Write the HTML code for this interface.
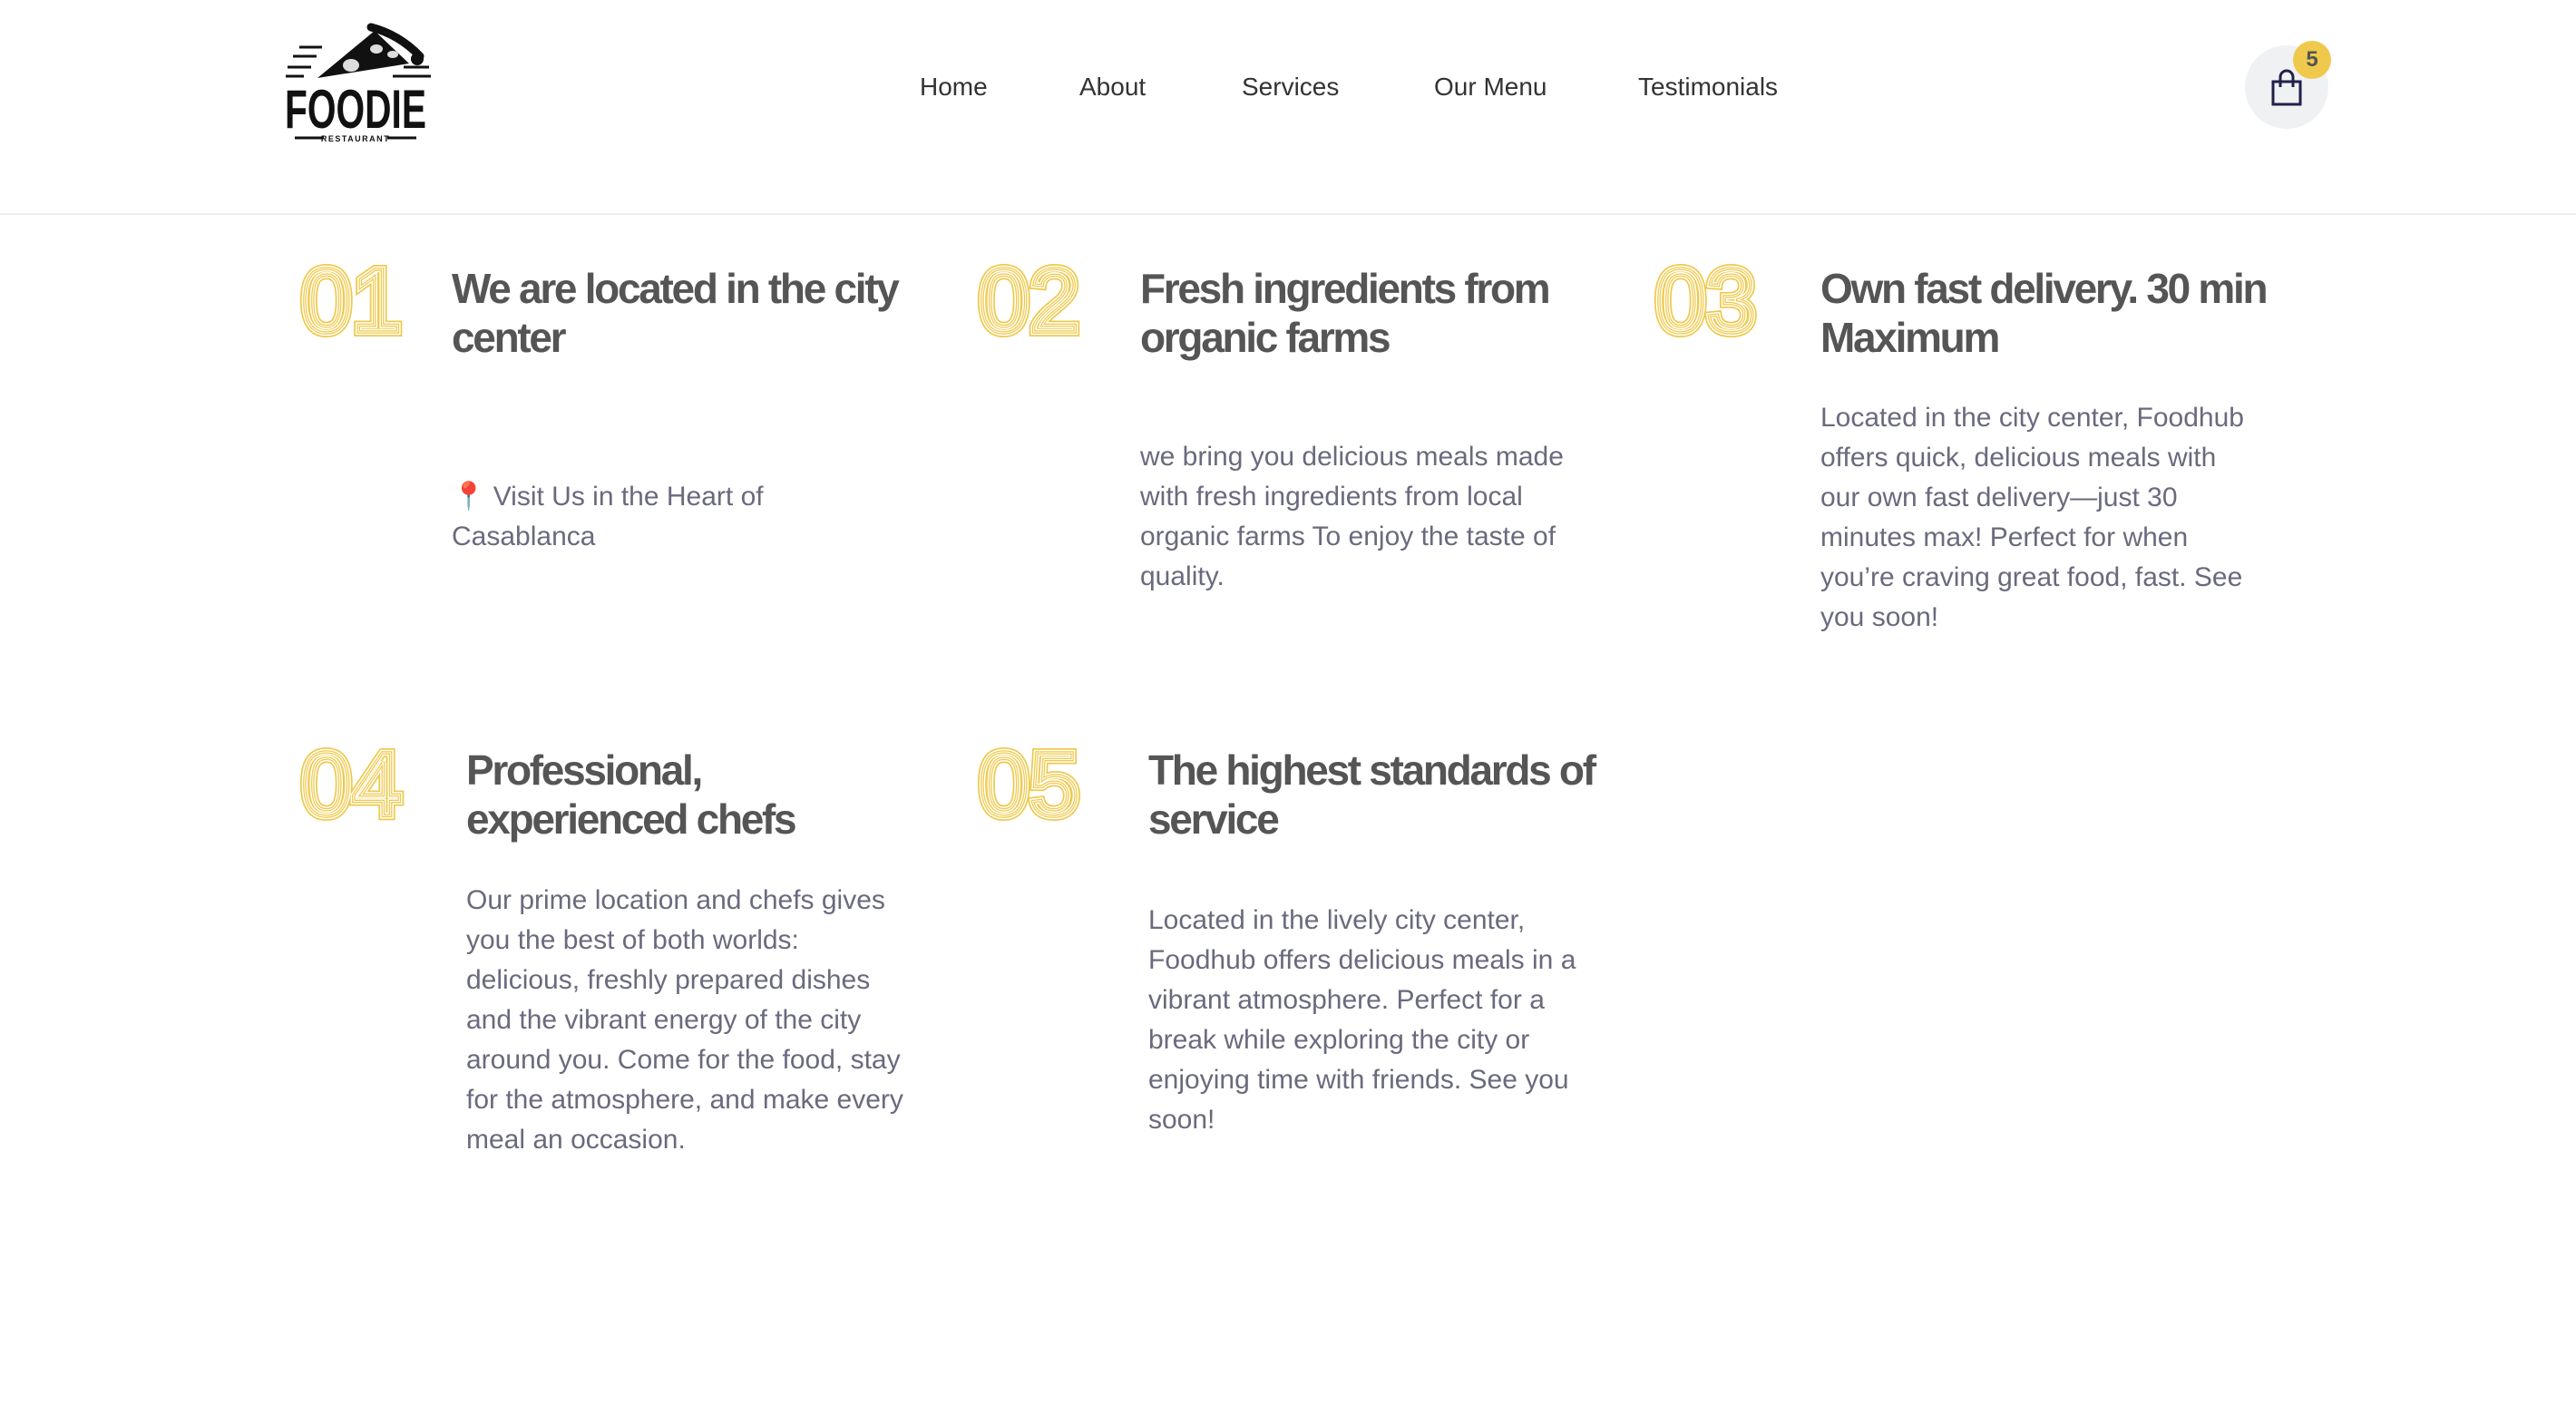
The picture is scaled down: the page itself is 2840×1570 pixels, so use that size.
<!DOCTYPE html>
<html><head><meta charset="utf-8"><style>
body{margin:0;width:2840px;height:1570px;background:#fff;position:relative;overflow:hidden;font-family:"Liberation Sans",sans-serif}
.hdr{position:absolute;left:0;top:0;width:2840px;height:235px;border-bottom:2px solid #eeeef0;background:#fff}
.nav{position:absolute;top:80px;font-size:28px;color:#333;}
.t{position:absolute;font-weight:bold;font-size:46px;line-height:54px;color:#555;letter-spacing:-2.3px;white-space:nowrap}
.p{position:absolute;font-size:30px;line-height:44px;color:#6a6a7e;white-space:nowrap}
.n{position:absolute}
</style></head><body>
<div class="hdr">
<svg style="position:absolute;left:305px;top:20px" width="175" height="145" viewBox="0 0 175 145">
 <path d="M45 66 L108 14 L146 50 Z" fill="#111"/>
 <path d="M104 10 Q135 18 158 42" stroke="#111" stroke-width="9" fill="none" stroke-linecap="round"/>
 <circle cx="155" cy="45" r="7" fill="#111"/>
 <ellipse cx="110" cy="34" rx="8" ry="6" fill="#ddd" stroke="#111" stroke-width="2"/>
 <ellipse cx="82" cy="52" rx="9" ry="7" fill="#ddd"/>
 <ellipse cx="128" cy="40" rx="6" ry="4" fill="#ddd"/>
 <g stroke="#111" stroke-width="3"><line x1="25" y1="32" x2="50" y2="32"/><line x1="18" y1="42" x2="44" y2="42"/><line x1="12" y1="54" x2="38" y2="54"/><line x1="10" y1="64" x2="30" y2="64"/><line x1="140" y1="54" x2="168" y2="54"/><line x1="128" y1="64" x2="170" y2="64"/></g>
 <text x="87" y="121" text-anchor="middle" font-family="Liberation Sans Narrow, Liberation Sans, sans-serif" font-weight="bold" font-size="60" textLength="156" lengthAdjust="spacingAndGlyphs" fill="#111">FOODIE</text>
 <line x1="20" y1="132" x2="52" y2="132" stroke="#111" stroke-width="3"/><line x1="122" y1="132" x2="154" y2="132" stroke="#111" stroke-width="3"/>
 <text x="87" y="136" text-anchor="middle" font-size="9" font-weight="bold" letter-spacing="1.5" fill="#111">RESTAURANT</text>
</svg>
<div class="nav" style="left:1014px">Home</div>
<div class="nav" style="left:1190px">About</div>
<div class="nav" style="left:1369px">Services</div>
<div class="nav" style="left:1581px">Our Menu</div>
<div class="nav" style="left:1806px">Testimonials</div>
<div style="position:absolute;left:2475px;top:50px;width:92px;height:92px;border-radius:50%;background:#f0f1f3"></div>
<svg style="position:absolute;left:2503px;top:76px" width="36" height="42" viewBox="0 0 36 42"><path d="M3 14 H33 V39 H3 Z" fill="none" stroke="#22204a" stroke-width="3"/><path d="M11 20 V9 a7 7 0 0 1 14 0 V20" fill="none" stroke="#22204a" stroke-width="3"/></svg>
<div style="position:absolute;left:2528px;top:45px;width:42px;height:42px;border-radius:50%;background:#efc94c;color:#555;font-weight:bold;font-size:24px;line-height:42px;text-align:center">5</div>
</div>

<svg class="n" style="left:330px;top:288px" width="130" height="85"><g font-family="Liberation Sans,sans-serif" font-size="100" fill="none"><text x="2" y="78" stroke="#efc94c" stroke-width="10">01</text><text x="2" y="78" stroke="#fff" stroke-width="6.5">01</text><text x="2" y="78" stroke="#efc94c" stroke-width="3.5">01</text><text x="2" y="78" stroke="#fff" stroke-width="1">01</text></g></svg>
<svg class="n" style="left:1077px;top:288px" width="140" height="85"><g font-family="Liberation Sans,sans-serif" font-size="100" fill="none"><text x="2" y="78" stroke="#efc94c" stroke-width="10">02</text><text x="2" y="78" stroke="#fff" stroke-width="6.5">02</text><text x="2" y="78" stroke="#efc94c" stroke-width="3.5">02</text><text x="2" y="78" stroke="#fff" stroke-width="1">02</text></g></svg>
<svg class="n" style="left:1823px;top:288px" width="140" height="85"><g font-family="Liberation Sans,sans-serif" font-size="100" fill="none"><text x="2" y="78" stroke="#efc94c" stroke-width="10">03</text><text x="2" y="78" stroke="#fff" stroke-width="6.5">03</text><text x="2" y="78" stroke="#efc94c" stroke-width="3.5">03</text><text x="2" y="78" stroke="#fff" stroke-width="1">03</text></g></svg>
<svg class="n" style="left:330px;top:821px" width="140" height="85"><g font-family="Liberation Sans,sans-serif" font-size="100" fill="none"><text x="2" y="78" stroke="#efc94c" stroke-width="10">04</text><text x="2" y="78" stroke="#fff" stroke-width="6.5">04</text><text x="2" y="78" stroke="#efc94c" stroke-width="3.5">04</text><text x="2" y="78" stroke="#fff" stroke-width="1">04</text></g></svg>
<svg class="n" style="left:1077px;top:821px" width="140" height="85"><g font-family="Liberation Sans,sans-serif" font-size="100" fill="none"><text x="2" y="78" stroke="#efc94c" stroke-width="10">05</text><text x="2" y="78" stroke="#fff" stroke-width="6.5">05</text><text x="2" y="78" stroke="#efc94c" stroke-width="3.5">05</text><text x="2" y="78" stroke="#fff" stroke-width="1">05</text></g></svg>

<div class="t" style="left:498px;top:291px">We are located in the city<br>center</div>
<div class="t" style="left:1257px;top:291px">Fresh ingredients from<br>organic farms</div>
<div class="t" style="left:2007px;top:291px">Own fast delivery. 30 min<br>Maximum</div>
<div class="t" style="left:514px;top:822px">Professional,<br>experienced chefs</div>
<div class="t" style="left:1266px;top:822px">The highest standards of<br>service</div>

<div class="p" style="left:498px;top:526px"><span style="color:#c33">📍</span> Visit Us in the Heart of<br>Casablanca</div>
<div class="p" style="left:1257px;top:482px">we bring you delicious meals made<br>with fresh ingredients from local<br>organic farms To enjoy the taste of<br>quality.</div>
<div class="p" style="left:2007px;top:439px">Located in the city center, Foodhub<br>offers quick, delicious meals with<br>our own fast delivery—just 30<br>minutes max! Perfect for when<br>you’re craving great food, fast. See<br>you soon!</div>
<div class="p" style="left:514px;top:971px">Our prime location and chefs gives<br>you the best of both worlds:<br>delicious, freshly prepared dishes<br>and the vibrant energy of the city<br>around you. Come for the food, stay<br>for the atmosphere, and make every<br>meal an occasion.</div>
<div class="p" style="left:1266px;top:993px">Located in the lively city center,<br>Foodhub offers delicious meals in a<br>vibrant atmosphere. Perfect for a<br>break while exploring the city or<br>enjoying time with friends. See you<br>soon!</div>
</body></html>
